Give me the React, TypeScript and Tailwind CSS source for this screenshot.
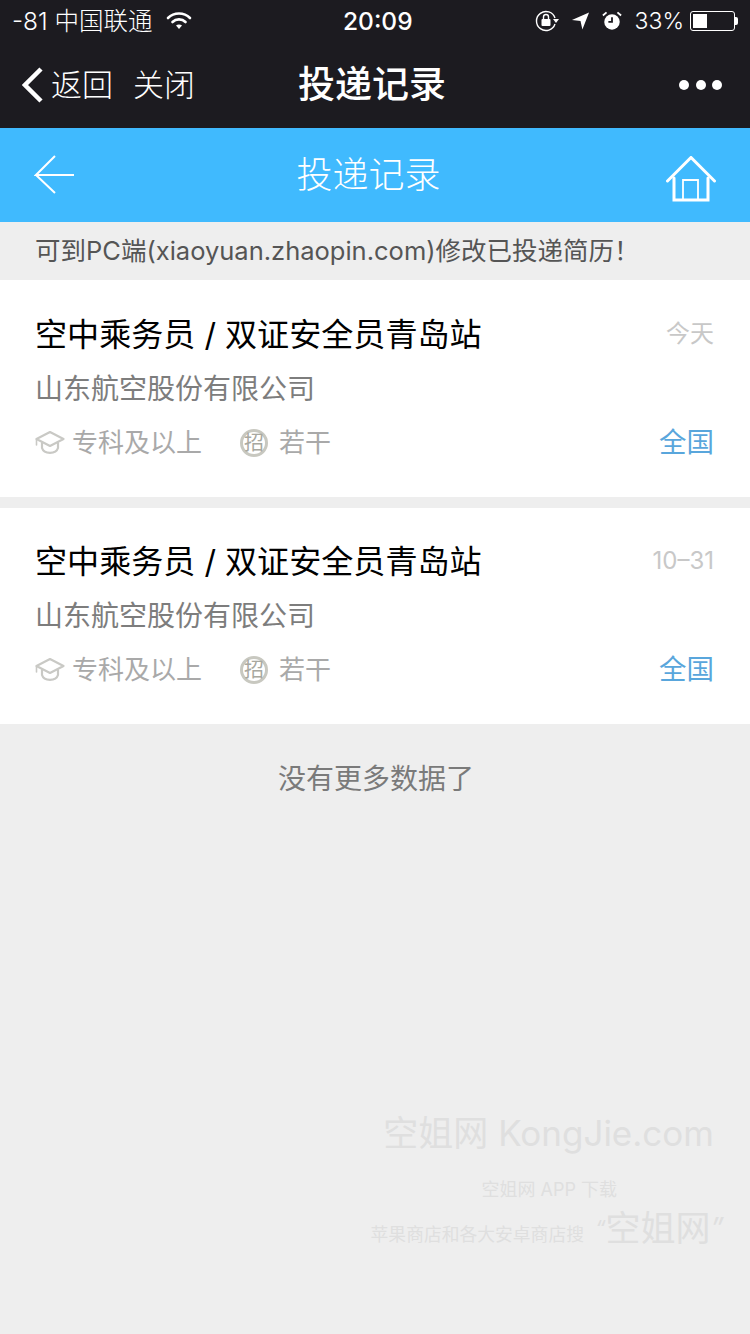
import React from 'react';

const FONT = 'font-["Inter","Noto_Sans_CJK_SC",sans-serif]';

const CapIcon = () => (
  <svg width="30" height="25" viewBox="0 0 30 25" fill="none" stroke="#c9c9c5" strokeWidth="2.2" strokeLinejoin="round" strokeLinecap="round">
    <path d="M15 2 L28.5 9 L15 16 L1.5 9 Z" />
    <path d="M7 13 V18 C9 24.5 21 24.5 23 18 V13" />
    <path d="M1.5 9 V15" strokeWidth="1.6" />
  </svg>
);

const ZhaoIcon = () => (
  <span className="flex h-[28px] w-[28px] items-center justify-center rounded-full border-[3px] border-[#c8c8c0] text-[20px] font-normal leading-none text-[#a8a8a0]">
    招
  </span>
);

const JobCard = ({ date, height, titleTop }: { date: string; height: string; titleTop: string }) => (
  <div className={`flex flex-col bg-white pl-[35px] pr-[36px] ${height} ${titleTop}`}>
    <div className="flex items-start justify-between">
      <span className="text-[32.1px] leading-[44px] text-black">空中乘务员 / 双证安全员青岛站</span>
      <span className="mt-[3px] text-[24px] leading-[36px] text-[#c8c8c8]">{date}</span>
    </div>
    <div className="mt-[12px] text-[28px] leading-[40px] text-[#7d7d7d]">山东航空股份有限公司</div>
    <div className="mt-[15px] flex items-center justify-between">
      <div className="flex items-center text-[26px] leading-[36px] text-[#a9a9a9]">
        <CapIcon />
        <span className="ml-[7px]">专科及以上</span>
        <span className="ml-[38px]"><ZhaoIcon /></span>
        <span className="ml-[11px]">若干</span>
      </div>
      <span className="mb-[1px] text-[27.5px] leading-[36px] text-[#59a6dc]">全国</span>
    </div>
  </div>
);

export default function App() {
  return (
    <div className={`flex h-[1334px] w-[750px] flex-col overflow-hidden bg-[#eeeeee] ${FONT}`}>
      {/* WeChat chrome */}
      <div className="h-[128px] shrink-0 bg-[#1c1b20] text-white">
        <div className="relative flex h-[42px] items-center justify-between pl-[12px] pr-[12px] text-[24.5px]">
          <div className="flex items-center">
            <span className="font-light">-81 中国联通</span>
            <svg className="ml-[13px]" width="26" height="20" viewBox="0 0 26 20" fill="none" stroke="white" strokeWidth="2.6" strokeLinecap="round">
              <path d="M2 7 C8 1 18 1 24 7" />
              <path d="M6.5 11 C10 7.5 16 7.5 19.5 11" />
              <path d="M13 18 L10 14.5 C11.5 13.2 14.5 13.2 16 14.5 Z" fill="white" stroke="none" />
            </svg>
          </div>
          <span className="absolute left-[343px] font-medium">20:09</span>
          <div className="flex items-center">
            <svg width="24" height="22" viewBox="0 0 24 22" fill="none" stroke="white" strokeWidth="1.4">
              <path d="M20 14 A9.5 9.5 0 1 1 20 8" />
              <path d="M18 9 L24 9 L21 13 Z" fill="white" stroke="none" />
              <rect x="6.5" y="9" width="9" height="7" rx="1" fill="white" stroke="none" />
              <path d="M8.5 9 V7 A2.5 2.5 0 0 1 13.5 7 V9" />
            </svg>
            <svg className="ml-[12px]" width="19" height="20" viewBox="0 0 20 20" fill="white">
              <path d="M19 1 L12 19 L10 10 L1 9 Z" />
            </svg>
            <svg className="ml-[12px]" width="20" height="22" viewBox="0 0 22 22">
              <circle cx="11" cy="12" r="8.5" fill="white" />
              <path d="M11 7 V12 H7" stroke="#1c1b20" strokeWidth="2" fill="none" />
              <path d="M1 5 L5 1.5 M21 5 L17 1.5" stroke="white" strokeWidth="2" />
            </svg>
            <span className="ml-[13px] text-[23px] font-light">33%</span>
            <div className="ml-[6px] flex h-[20px] w-[45px] items-center rounded-[3px] border border-white p-[2px]">
              <div className="h-full w-[14px] bg-white" />
            </div>
            <div className="h-[8px] w-[3px] rounded-r-[2px] bg-white" />
          </div>
        </div>
        <div className="relative flex h-[86px] items-center pl-[22px]">
          <svg width="22" height="36" viewBox="0 0 22 36" fill="none" stroke="white" strokeWidth="4.5">
            <path d="M19 2 L3 18 L19 34" />
          </svg>
          <span className="ml-[7px] text-[31px] font-light">返回</span>
          <span className="ml-[20px] text-[31px] font-light">关闭</span>
          <span className="absolute left-[298px] text-[37px] font-medium">投递记录</span>
          <div className="absolute right-[28px] flex gap-[6.5px]">
            <span className="h-[10px] w-[10px] rounded-full bg-white" />
            <span className="h-[10px] w-[10px] rounded-full bg-white" />
            <span className="h-[10px] w-[10px] rounded-full bg-white" />
          </div>
        </div>
      </div>

      {/* Page header */}
      <div className="flex h-[94px] shrink-0 items-center justify-between bg-[#40bafe] pl-[34px] pr-[33px] text-white">
        <svg width="42" height="42" viewBox="0 0 42 42" fill="none" stroke="white" strokeWidth="2">
          <path d="M40 21 H2 L21 2 M2 21 L21 39" />
        </svg>
        <span className="ml-[-4px] text-[36px] font-light">投递记录</span>
        <svg className="mt-[8px]" width="52" height="46" viewBox="0 0 52 46" fill="none" stroke="white" strokeWidth="3" strokeLinecap="round">
          <path d="M2.5 25 L26 1.5 L49.5 25" />
          <path d="M9 22 V44 H43 V22" />
          <path d="M18 44 V24 H33 V44" strokeWidth="1.8" />
        </svg>
      </div>

      {/* Notice */}
      <div className="flex h-[58px] shrink-0 items-center pl-[35px] text-[25.5px] text-[#555555]">
        可到PC端(xiaoyuan.zhaopin.com)修改已投递简历！
      </div>

      <JobCard date="今天" height="h-[217px]" titleTop="pt-[33px]" />
      <div className="h-[11px] shrink-0" />
      <JobCard date="10–31" height="h-[216px]" titleTop="pt-[32px]" />

      <div className="mt-[35px] pl-[2px] text-center text-[28px] leading-[40px] text-[#7a7a7a]">没有更多数据了</div>

      {/* Watermark */}
      <div className="mt-[309px] flex flex-col items-end pr-[26px] text-[#dfdfdf]">
        <div className="mr-[10px] text-[35px] leading-[50px]">空姐网 KongJie.com</div>
        <div className="mr-[107px] mt-[19px] text-[18px] leading-[26px]">空姐网 APP 下载</div>
        <div className="flex items-center">
          <span className="mt-[14px] text-[17.8px]">苹果商店和各大安卓商店搜</span>
          <span className="ml-[11px] flex items-center text-[35px] leading-[50px]">
            <span className="text-[22px] italic">“</span>空姐网<span className="text-[28px] italic">”</span>
          </span>
        </div>
      </div>
    </div>
  );
}
